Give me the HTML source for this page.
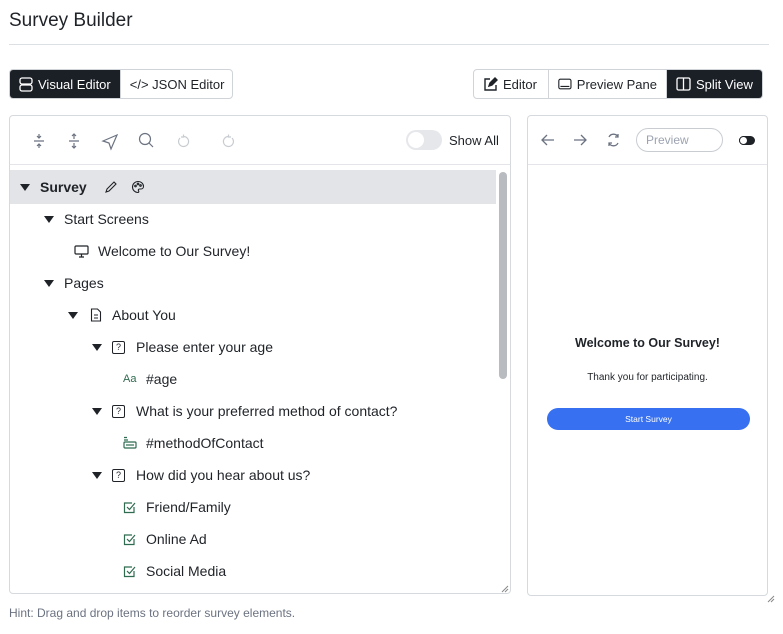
<!DOCTYPE html>
<html><head><style>
*{box-sizing:border-box;margin:0;padding:0}
body{width:783px;height:634px;background:#fff;font-family:"Liberation Sans",sans-serif;color:#1f2328;position:relative;overflow:hidden}
.a{position:absolute}
.title{left:9px;top:10px;font-size:19px;color:#1f2328}
.hr{left:9px;top:44px;width:760px;height:1px;background:#dcdfe3}
.grp{display:flex;border:1px solid #d0d4d9;border-radius:4px;overflow:hidden;height:30px}
.grp div{display:flex;align-items:center;gap:5px;padding:0 9px;font-size:13px;border-right:1px solid #d0d4d9;color:#1f2328;white-space:nowrap}
.grp div:last-child{border-right:none}
.grp .on{background:#1b1f26;color:#fff}
.panel{border:1px solid #d6d9dd;border-radius:4px}
.row{position:absolute;left:0;height:32px;width:486px;display:flex;align-items:center;font-size:14px;color:#1f2328}
.tri{position:absolute;width:0;height:0;border-left:5px solid transparent;border-right:5px solid transparent;border-top:7px solid #1f2328}
.q{position:absolute;width:13px;height:13px;border:1px solid #1f2328;border-radius:2px;font-size:9px;text-align:center;line-height:11px}
.t{position:absolute}
.g{color:#2f6b4f}
</style></head><body>
<div class="a title">Survey Builder</div>
<div class="a hr"></div>

<div class="a grp" style="left:9px;top:69px;width:224px">
 <div class="on" style="width:115px"><svg width="14" height="15" viewBox="0 0 14 15" fill="none" stroke="#fff" stroke-width="1.3"><rect x="1" y="1" width="12" height="6" rx="2"/><rect x="1" y="8" width="12" height="6" rx="2"/></svg>Visual Editor</div>
 <div style="flex:1">&lt;/&gt; JSON Editor</div>
</div>

<div class="a grp" style="left:473px;top:69px;width:290px">
 <div style="width:75px"><svg width="15" height="15" viewBox="0 0 15 15" fill="none" stroke="#1f2328" stroke-width="1.4"><path d="M7 2H2v11h11V8"/><path d="M6 9l1-3 5-5 2 2-5 5z" fill="#1f2328"/></svg>Editor</div>
 <div style="width:118px"><svg width="17" height="14" viewBox="0 0 17 14" fill="none" stroke="#1f2328" stroke-width="1.4"><rect x="1" y="1" width="15" height="12" rx="2"/><path d="M3 10h11"/></svg>Preview Pane</div>
 <div class="on" style="flex:1"><svg width="15" height="14" viewBox="0 0 15 14" fill="none" stroke="#fff" stroke-width="1.3"><rect x="1" y="1" width="13" height="12" rx="1.5"/><path d="M7.5 1v12"/></svg>Split View</div>
</div>

<div class="a panel" style="left:9px;top:115px;width:502px;height:479px;overflow:hidden">
 <div class="a" style="left:0;top:48px;width:500px;height:1px;background:#e3e5e8"></div>
 <svg class="a" style="left:20px;top:15px" width="220" height="20" viewBox="0 0 220 20" fill="none" stroke="#6b7280" stroke-width="1.2">
  <path d="M4 10h10M9 3v4M7 5l2 2 2-2M9 17v-4M7 15l2-2 2 2"/>
  <path d="M39 10h10M44 3v5M42 5l2-2 2 2M44 17v-5M42 15l2 2 2-2"/>
  <path d="M87 4L73 10l6 2 2 6z"/>
  <circle cx="115" cy="8" r="5.5"/><path d="M119 12l4 4"/>
  <path d="M150 7a5 5 0 1 0 3.5-1.5M153.5 3.5v2.5h-2.5" stroke="#c8ccd1"/>
  <path d="M202 7a5 5 0 1 1-3.5-1.5M198.5 3.5v2.5h2.5" stroke="#c8ccd1"/>
 </svg>
 <div class="a" style="left:396px;top:14px;width:36px;height:20px;border-radius:10px;background:#e5e7eb"><div class="a" style="left:2px;top:2px;width:16px;height:16px;border-radius:50%;background:#fff"></div></div>
 <div class="a" style="left:439px;top:17px;font-size:13px">Show All</div>

 <div class="a" style="left:0;top:53px;width:486px;height:425px">
  <div class="row" style="top:1px;height:34px;background:#e3e4e8"><div class="tri" style="left:10px;top:14px"></div><b class="t" style="left:30px">Survey</b>
   <svg class="a" style="left:94px;top:10px" width="14" height="14" viewBox="0 0 14 14" fill="none" stroke="#1f2328" stroke-width="1.1"><path d="M2 12l1-3 7-7 2 2-7 7z"/></svg>
   <svg class="a" style="left:121px;top:10px" width="14" height="14" viewBox="0 0 14 14" fill="none" stroke="#1f2328" stroke-width="1.1"><path d="M7 1.5a5.5 5.5 0 1 0 0 11c1 0 1-1 .5-1.8-.5-.8 0-1.7 1-1.7h1.5a2.5 2.5 0 0 0 2.5-2.5C12.5 3.5 10 1.5 7 1.5z"/><circle cx="4.5" cy="6" r=".8"/><circle cx="7" cy="4" r=".8"/><circle cx="9.5" cy="5.5" r=".8"/></svg>
  </div>
  <div class="row" style="top:34px"><div class="tri" style="left:34px;top:13px"></div><span class="t" style="left:54px">Start Screens</span></div>
  <div class="row" style="top:66px"><svg class="a" style="left:64px;top:10px" width="15" height="13" viewBox="0 0 15 13" fill="none" stroke="#1f2328" stroke-width="1.2"><rect x="1" y="1" width="13" height="8" rx="1"/><path d="M5 12h5M7.5 9v3"/></svg><span class="t" style="left:88px">Welcome to Our Survey!</span></div>
  <div class="row" style="top:98px"><div class="tri" style="left:34px;top:13px"></div><span class="t" style="left:54px">Pages</span></div>
  <div class="row" style="top:130px"><div class="tri" style="left:58px;top:13px"></div><svg class="a" style="left:80px;top:9px" width="12" height="14" viewBox="0 0 12 14" fill="none" stroke="#1f2328" stroke-width="1.1"><path d="M1.5 1h6l3 3v9h-9z"/><path d="M4 7h4M4 10h4"/></svg><span class="t" style="left:102px">About You</span></div>
  <div class="row" style="top:162px"><div class="tri" style="left:82px;top:13px"></div><div class="q" style="left:102px;top:10px">?</div><span class="t" style="left:126px">Please enter your age</span></div>
  <div class="row" style="top:194px"><span class="t g" style="left:113px;font-size:11px">Aa</span><span class="t" style="left:136px">#age</span></div>
  <div class="row" style="top:226px"><div class="tri" style="left:82px;top:13px"></div><div class="q" style="left:102px;top:10px">?</div><span class="t" style="left:126px">What is your preferred method of contact?</span></div>
  <div class="row" style="top:258px"><svg class="a" style="left:113px;top:9px" width="14" height="14" viewBox="0 0 14 14" fill="none" stroke="#2f6b4f" stroke-width="1.2"><path d="M1 1.5h3M1 4h4"/><rect x="1" y="6" width="12" height="6" rx="1"/><path d="M3 9h8"/></svg><span class="t" style="left:136px">#methodOfContact</span></div>
  <div class="row" style="top:290px"><div class="tri" style="left:82px;top:13px"></div><div class="q" style="left:102px;top:10px">?</div><span class="t" style="left:126px">How did you hear about us?</span></div>
  <div class="row" style="top:322px"><svg class="a" style="left:113px;top:10px" width="13" height="13" viewBox="0 0 13 13" fill="none" stroke="#2f6b4f" stroke-width="1.2"><path d="M11 6v5.5H1.5V2H9"/><path d="M4 6l2.5 2.5L12 2"/></svg><span class="t" style="left:136px">Friend/Family</span></div>
  <div class="row" style="top:354px"><svg class="a" style="left:113px;top:10px" width="13" height="13" viewBox="0 0 13 13" fill="none" stroke="#2f6b4f" stroke-width="1.2"><path d="M11 6v5.5H1.5V2H9"/><path d="M4 6l2.5 2.5L12 2"/></svg><span class="t" style="left:136px">Online Ad</span></div>
  <div class="row" style="top:386px"><svg class="a" style="left:113px;top:10px" width="13" height="13" viewBox="0 0 13 13" fill="none" stroke="#2f6b4f" stroke-width="1.2"><path d="M11 6v5.5H1.5V2H9"/><path d="M4 6l2.5 2.5L12 2"/></svg><span class="t" style="left:136px">Social Media</span></div>
 </div>
 <div class="a" style="left:489px;top:56px;width:8px;height:207px;border-radius:4px;background:#b8bbbf"></div>
 <svg class="a" style="left:490px;top:468px" width="9" height="9" viewBox="0 0 9 9" stroke="#888" stroke-width="1"><path d="M8 2L2 8M8 5L5 8"/></svg>
</div>

<div class="a panel" style="left:527px;top:115px;width:241px;height:481px">
 <div class="a" style="left:0;top:48px;width:239px;height:1px;background:#e3e5e8"></div>
 <svg class="a" style="left:12px;top:16px" width="110" height="16" viewBox="0 0 110 16" fill="none" stroke="#6b7280" stroke-width="1.3">
  <path d="M14 8H2M7 3L2 8l5 5"/><path d="M34 8h12M41 3l5 5-5 5"/>
  <path d="M78 5a5 5 0 0 0-9 0M69 11a5 5 0 0 0 9 0M78 2v3h-3M69 14v-3h3"/>
 </svg>
 <div class="a" style="left:108px;top:12px;width:87px;height:24px;border:1px solid #c9cdd2;border-radius:12px;font-size:12px;color:#9ca3af;padding:4px 0 0 9px">Preview</div>
 <div class="a" style="left:211px;top:20px;width:16px;height:9px;border:1px solid #1f2328;border-radius:5px;background:#1f2328"><div class="a" style="left:-1px;top:-1px;width:9px;height:9px;border-radius:50%;background:#fff;border:1px solid #1f2328"></div></div>
 <div class="a" style="left:0;top:220px;width:239px;text-align:center;font-size:12.5px;font-weight:bold">Welcome to Our Survey!</div>
 <div class="a" style="left:0;top:256px;width:239px;text-align:center;font-size:10px">Thank you for participating.</div>
 <div class="a" style="left:19px;top:292px;width:203px;height:22px;border-radius:11px;background:#3770f0;color:#fff;font-size:8.5px;text-align:center;line-height:22px">Start Survey</div>
 <svg class="a" style="left:238px;top:478px" width="9" height="9" viewBox="0 0 9 9" stroke="#888" stroke-width="1"><path d="M8 2L2 8M8 5L5 8"/></svg>
</div>

<div class="a" style="left:9px;top:606px;font-size:12px;color:#6b7280">Hint: Drag and drop items to reorder survey elements.</div>
</body></html>
